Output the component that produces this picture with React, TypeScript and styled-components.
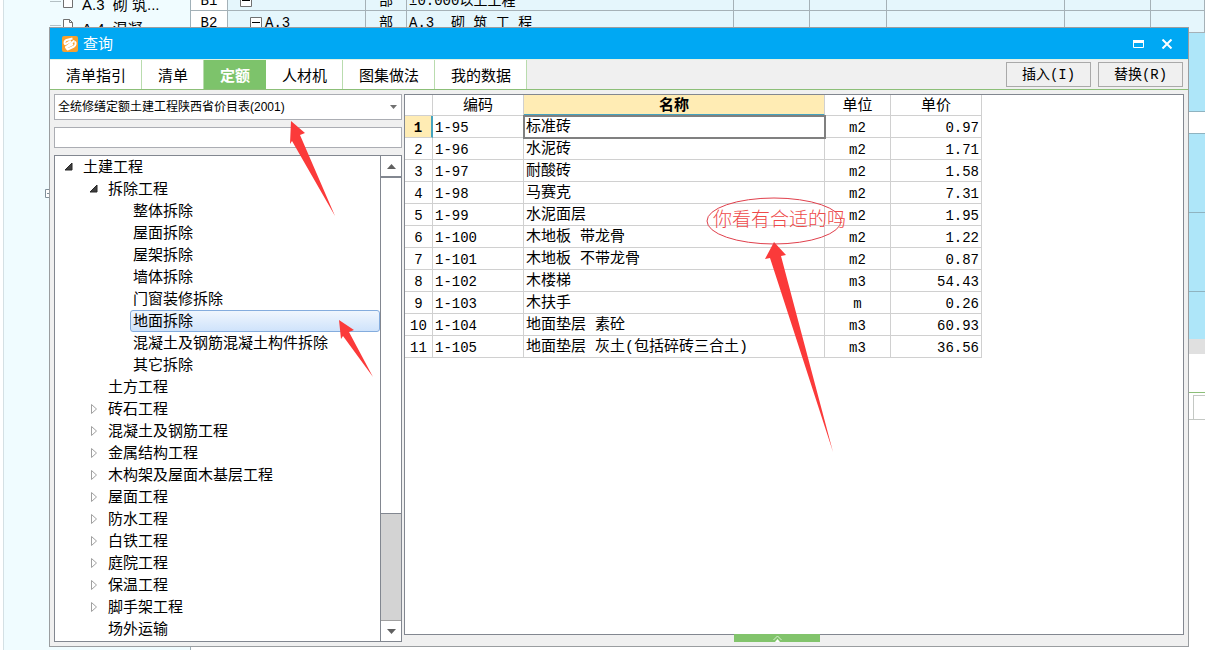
import React, { useState } from "react";
import styled, { createGlobalStyle, css } from "styled-components";

const sans = `"Liberation Sans", "Noto Sans CJK SC", sans-serif`;
const mono = `"Liberation Mono", "Noto Sans CJK SC", monospace`;

const GlobalStyle = createGlobalStyle`
  *, *::before, *::after { box-sizing: border-box; }
  body { margin: 0; background: #fff; color: #000; font-family: ${sans}; font-size: 15px; }
  button, input, select { font: inherit; color: inherit; margin: 0; border-radius: 0; }
`;

const Desktop = styled.div`
  position: relative;
  display: flex;
  height: 100vh;
  min-height: 480px;
  overflow: hidden;
`;

/* ---------- main window behind the dialog ---------- */

const OutlinePane = styled.aside`
  flex: none;
  width: 191px;
  padding-left: 50px;
  background: linear-gradient(90deg, #fff 3px, #d4e0e4 3px, #d4e0e4 4px, #f0fcff 4px);
  border-right: 1px solid #a0b0b8;
`;

const OutlineList = styled.div`
  margin-top: -7px;
`;

const OutlineItem = styled.div`
  display: flex;
  align-items: center;
  height: 24px;
  line-height: 24px;
  white-space: pre;
  &::before {
    content: "";
    flex: none;
    width: 11px;
    height: 1px;
    margin-bottom: 8px;
    background: #b4c0c4;
  }
  svg { flex: none; margin: 0 8px 8px 0; }
`;

const OutlineToggle = styled.svg`
  position: absolute;
  left: 45px;
  top: 189px;
`;

const Sheet = styled.div`
  flex: 1;
  min-width: 0;
  display: flex;
  flex-direction: column;
`;

/* scrolled by half a row, so the first row is partly out of view */
const SheetTable = styled.table`
  width: 100%;
  margin-top: -11px;
  table-layout: fixed;
  border-collapse: separate;
  border-spacing: 0;
  background: #e5f6fc;
  font-family: ${mono};
  font-size: 14px;
  td {
    height: 22px;
    padding: 3px 2px 0;
    line-height: 18px;
    border-right: 1px solid #a5b1b7;
    border-bottom: 1px solid #a5b1b7;
    white-space: pre;
    overflow: hidden;
  }
  td:first-child { background: #fff; text-align: center; }
  td:nth-child(3) { text-align: center; }
`;

const ToggleCell = styled.span<{ $level: number }>`
  display: flex;
  align-items: center;
  gap: 3px;
  padding-left: ${(p) => p.$level * 10}px;
`;

const Band = styled.div<{ $h: number; $tone: string; $line?: string }>`
  flex: none;
  display: flex;
  justify-content: flex-end;
  height: ${(p) => p.$h}px;
  background: ${(p) => p.$tone};
  border-bottom: 1px solid ${(p) => p.$line ?? "#8fb3c0"};
`;

const BandCell = styled.span`
  width: 12px;
  margin-top: 2px;
  border-top: 1px solid #c4c8c4;
  border-left: 1px solid #c4c8c4;
`;

/* ---------- dialog ---------- */

const Dialog = styled.section`
  position: absolute;
  inset: 27px 16px 3px 49px;
  display: flex;
  flex-direction: column;
  background: #f0f0f0;
  border: 1px solid #9a9da0;
`;

const TitleBar = styled.header`
  flex: none;
  display: flex;
  align-items: center;
  gap: 5px;
  height: 31px;
  padding: 0 14px 0 12px;
  background: #00a8f3;
  color: #fff;
`;

const Title = styled.h1`
  flex: 1;
  margin: 0;
  font-size: 15px;
  font-weight: 400;
  line-height: 20px;
`;

const WindowButton = styled.button`
  display: flex;
  align-items: center;
  justify-content: center;
  width: 14px;
  height: 20px;
  margin-left: 10px;
  padding: 0;
  border: 0;
  background: none;
`;

const TabBar = styled.div`
  flex: none;
  display: flex;
  align-items: stretch;
  height: 31px;
  border-top: 1px solid #e3f2e0;
  border-bottom: 1px solid #8cbf78;
`;

const Tab = styled.button<{ $active: boolean }>`
  padding: 3px 15px 0 16px;
  border: 0;
  border-right: 1px solid #b9dcae;
  background: #fff;
  line-height: 20px;
  ${(p) =>
    p.$active &&
    css`
      background: #7dc36b;
      border-color: #7dc36b;
      color: #fff;
      font-weight: 700;
    `}
`;

const Actions = styled.div`
  display: flex;
  align-items: center;
  gap: 7px;
  margin-left: auto;
  padding-right: 5px;
`;

const ActionButton = styled.button`
  width: 85px;
  height: 25px;
  padding: 0;
  border: 1px solid #a9a9a9;
  background: #f0f0f0;
  font-family: ${mono};
  font-size: 14px;
  line-height: 20px;
`;

const Body = styled.div`
  flex: 1;
  min-height: 0;
  display: flex;
  gap: 2px;
  padding: 4px;
`;

const Side = styled.div`
  flex: none;
  width: 348px;
  display: flex;
  flex-direction: column;
  gap: 7px;
`;

const SelectWrap = styled.div`
  flex: none;
  display: grid;
  align-items: center;
  > * { grid-area: 1 / 1; }
  svg { justify-self: end; margin-right: 5px; pointer-events: none; }
`;

const CatalogSelect = styled.select`
  appearance: none;
  width: 100%;
  height: 26px;
  padding: 0 20px 0 3px;
  border: 1px solid #abadb3;
  background: #fff;
  font-size: 12px;
`;

const SearchInput = styled.input`
  flex: none;
  width: 100%;
  height: 21px;
  padding: 0 4px;
  border: 1px solid #abadb3;
  background: #fff;
`;

const TreePanel = styled.div`
  flex: 1;
  min-height: 0;
  display: flex;
  border: 1px solid #828790;
  background: #fff;
`;

const Tree = styled.ul`
  flex: 1;
  min-width: 0;
  margin: 0;
  padding: 0;
  list-style: none;
  overflow: hidden;
`;

const TreeRow = styled.li<{ $depth: number }>`
  display: flex;
  align-items: center;
  height: 22px;
  padding-left: ${(p) => p.$depth * 25 + 8}px;
  svg { flex: none; }
`;

const TreeLabel = styled.span<{ $selected: boolean }>`
  flex: 1;
  height: 22px;
  margin-left: 5px;
  padding-left: 2px;
  border: 1px solid transparent;
  line-height: 20px;
  white-space: nowrap;
  ${(p) =>
    p.$selected &&
    css`
      border-color: #84acdd;
      border-radius: 3px;
      background: linear-gradient(#f0f6fd, #cfe3fb);
    `}
`;

const ScrollBar = styled.div`
  flex: none;
  display: flex;
  flex-direction: column;
  width: 21px;
  border-left: 1px solid #828790;
  background: #d3d3d3;
`;

const ScrollButton = styled.button`
  flex: none;
  display: flex;
  align-items: center;
  justify-content: center;
  height: 21px;
  padding: 0;
  border: 0;
  background: #fff;
  &:first-child { border-bottom: 1px solid #828790; }
  &:last-child { border-top: 1px solid #a0a0a0; }
`;

const ScrollTrack = styled.div`
  flex: 1;
  min-height: 0;
`;

const ScrollThumb = styled.div`
  height: 76%;
  background: #fff;
  border-top: 1px solid #828790;
  border-bottom: 1px solid #828790;
`;

const Main = styled.div`
  flex: 1;
  min-width: 0;
  display: flex;
  flex-direction: column;
`;

const GridPanel = styled.div`
  flex: 1;
  min-height: 0;
  border: 1px solid #828790;
  background: #fff;
  overflow: hidden;
`;

const ExpandHandle = styled.button`
  flex: none;
  display: flex;
  align-items: center;
  justify-content: center;
  align-self: center;
  width: 86px;
  height: 8px;
  margin: -1px 34px 0 0;
  padding: 0;
  border: 0;
  background: #82c46c;
`;

const QuotaTable = styled.table`
  width: 577px;
  table-layout: fixed;
  border-collapse: separate;
  border-spacing: 0;
  line-height: 18px;
  th, td {
    height: 22px;
    padding: 3px 2px 0;
    border-right: 1px solid #d0d0d0;
    border-bottom: 1px solid #d0d0d0;
    white-space: nowrap;
    font-weight: 400;
  }
  thead th { height: 21px; padding-top: 0; }
`;

const NameHead = styled.th`
  && {
    background: #ffecb4;
    border-bottom: 2px solid #45a3bf;
    font-weight: 700;
  }
`;

const NumberCell = styled.th<{ $active: boolean }>`
  font-family: ${mono};
  font-size: 14px;
  ${(p) =>
    p.$active &&
    css`
      && {
        background: #ffecb4;
        border-right: 2px solid #45a3bf;
        font-weight: 700;
      }
    `}
`;

const CodeCell = styled.td`
  font-family: ${mono};
  font-size: 14px;
`;

const NameCell = styled.td<{ $active: boolean }>`
  font-family: ${mono};
  ${(p) => p.$active && `outline: 2px solid #808080; outline-offset: -1px;`}
`;

const UnitCell = styled(CodeCell)`
  text-align: center;
`;

const PriceCell = styled(CodeCell)`
  text-align: right;
`;

/* ---------- markup drawn over the window ---------- */

const Markup = styled.svg`
  position: absolute;
  left: 0;
  top: 0;
  width: 1205px;
  height: 650px;
  pointer-events: none;
`;

const Note = styled.p`
  position: absolute;
  left: 713px;
  top: 208px;
  margin: 0;
  color: #ee4a4a;
  font-size: 19px;
  font-weight: 300;
  line-height: 24px;
`;

const TABS = ["清单指引", "清单", "定额", "人材机", "图集做法", "我的数据"];

type Node = { label: string; depth: number; state?: "open" | "closed" };

const NODES: Node[] = [
  { label: "土建工程", depth: 0, state: "open" },
  { label: "拆除工程", depth: 1, state: "open" },
  { label: "整体拆除", depth: 2 },
  { label: "屋面拆除", depth: 2 },
  { label: "屋架拆除", depth: 2 },
  { label: "墙体拆除", depth: 2 },
  { label: "门窗装修拆除", depth: 2 },
  { label: "地面拆除", depth: 2 },
  { label: "混凝土及钢筋混凝土构件拆除", depth: 2 },
  { label: "其它拆除", depth: 2 },
  { label: "土方工程", depth: 1 },
  { label: "砖石工程", depth: 1, state: "closed" },
  { label: "混凝土及钢筋工程", depth: 1, state: "closed" },
  { label: "金属结构工程", depth: 1, state: "closed" },
  { label: "木构架及屋面木基层工程", depth: 1, state: "closed" },
  { label: "屋面工程", depth: 1, state: "closed" },
  { label: "防水工程", depth: 1, state: "closed" },
  { label: "白铁工程", depth: 1, state: "closed" },
  { label: "庭院工程", depth: 1, state: "closed" },
  { label: "保温工程", depth: 1, state: "closed" },
  { label: "脚手架工程", depth: 1, state: "closed" },
  { label: "场外运输", depth: 1 },
];

const ROWS: [string, string, string, string][] = [
  ["1-95", "标准砖", "m2", "0.97"],
  ["1-96", "水泥砖", "m2", "1.71"],
  ["1-97", "耐酸砖", "m2", "1.58"],
  ["1-98", "马赛克", "m2", "7.31"],
  ["1-99", "水泥面层", "m2", "1.95"],
  ["1-100", "木地板 带龙骨", "m2", "1.22"],
  ["1-101", "木地板 不带龙骨", "m2", "0.87"],
  ["1-102", "木楼梯", "m3", "54.43"],
  ["1-103", "木扶手", "m", "0.26"],
  ["1-104", "地面垫层 素砼", "m3", "60.93"],
  ["1-105", "地面垫层 灰土(包括碎砖三合土)", "m3", "36.56"],
];

const FileIcon = () => (
  <svg width="13" height="13" viewBox="0 0 13 13">
    <path d="M2.5 .5h6l3 3v9h-9z M8.5 .5v3h3" fill="#fff" stroke="#707070" />
  </svg>
);

const MinusBox = () => (
  <svg width="12" height="12" viewBox="0 0 12 12">
    <path d="M.5 .5h11v11H.5z" fill="#fff" stroke="#707070" />
    <path d="M2 5.5h8" stroke="#000" />
  </svg>
);

const TreeArrow = ({ state }: { state?: "open" | "closed" }) => (
  <svg width="12" height="12" viewBox="0 0 12 12">
    {state === "open" && <path d="M9 2v7H2z" fill="#404040" stroke="#262626" />}
    {state === "closed" && <path d="M3.5 1.5v9l5-4.5z" fill="#fff" stroke="#a0a0a0" />}
  </svg>
);

const AppIcon = () => (
  <svg width="16" height="16" viewBox="0 0 16 16">
    <rect width="16" height="16" rx="2" fill="#f7a02e" />
    <path
      d="M10.500 2.500L4.500 4C2.500 4.800 2 6.800 3 8.300l6-3.300M13 5.500c1 1.500.8 4-1 5l-6.500 3L4 11.500l7-3.500"
      fill="none"
      stroke="#fff"
      strokeWidth="2"
      strokeLinejoin="round"
    />
    <path d="M3.500 11.500L12.500 4.500" stroke="#fff" strokeWidth="2" />
  </svg>
);

export default function App() {
  const [tab, setTab] = useState("定额");
  const [selected, setSelected] = useState("地面拆除");

  return (
    <Desktop>
      <GlobalStyle />
      <OutlinePane>
        <OutlineList>
          <OutlineItem><FileIcon />A.3  砌 筑...</OutlineItem>
          <OutlineItem><FileIcon />A.4  混凝...</OutlineItem>
        </OutlineList>
      </OutlinePane>
      <OutlineToggle width="9" height="9" viewBox="0 0 9 9">
        <path d="M.5 .5h8v8h-8z M2 4.500h5" fill="#fff" stroke="#80909a" />
      </OutlineToggle>
      <Sheet>
        <SheetTable>
          <colgroup>
            <col style={{ width: 37 }} />
            <col style={{ width: 138 }} />
            <col style={{ width: 41 }} />
            <col style={{ width: 327 }} />
            <col style={{ width: 76 }} />
            <col style={{ width: 77 }} />
            <col style={{ width: 178 }} />
            <col style={{ width: 86 }} />
            <col />
          </colgroup>
          <tbody>
            <tr>
              <td>B1</td>
              <td><ToggleCell $level={1}><MinusBox /></ToggleCell></td>
              <td>部</td>
              <td>±0.000以上工程</td>
              <td /><td /><td /><td /><td />
            </tr>
            <tr>
              <td>B2</td>
              <td><ToggleCell $level={2}><MinusBox />A.3</ToggleCell></td>
              <td>部</td>
              <td>A.3  砌 筑 工 程</td>
              <td /><td /><td /><td /><td />
            </tr>
          </tbody>
        </SheetTable>
        <Band $h={79} $tone="#aee6f9" />
        <Band $h={22} $tone="#fff" />
        <Band $h={79} $tone="#aee6f9" />
        <Band $h={79} $tone="#aee6f9" />
        <Band $h={48} $tone="#aee6f9" $line="#e0e0e0" />
        <Band $h={14} $tone="#e0e0e0" $line="#e0e0e0" />
        <Band $h={39} $tone="#fff" $line="#8cbf78" />
        <Band $h={27} $tone="#fff" $line="#c4c8c4"><BandCell /></Band>
      </Sheet>

      <Dialog role="dialog" aria-labelledby="dialog-title">
        <TitleBar>
          <AppIcon />
          <Title id="dialog-title">查询</Title>
          <WindowButton aria-label="最大化">
            <svg width="11" height="8" viewBox="0 0 11 8"><path d="M.5 .5h10v7H.5z" fill="none" stroke="#fff" /><path d="M0 0h11v3H0z" fill="#fff" /></svg>
          </WindowButton>
          <WindowButton aria-label="关闭">
            <svg width="12" height="10" viewBox="0 0 12 10"><path d="M1.500 .5l9 9M10.500 .5l-9 9" stroke="#fff" strokeWidth="2" /></svg>
          </WindowButton>
        </TitleBar>

        <TabBar>
          {TABS.map((t) => (
            <Tab key={t} $active={t === tab} onClick={() => setTab(t)}>{t}</Tab>
          ))}
          <Actions>
            <ActionButton>插入(I)</ActionButton>
            <ActionButton>替换(R)</ActionButton>
          </Actions>
        </TabBar>

        <Body>
          <Side>
            <SelectWrap>
              <CatalogSelect aria-label="定额库">
                <option>全统修缮定额土建工程陕西省价目表(2001)</option>
              </CatalogSelect>
              <svg width="7" height="4" viewBox="0 0 7 4"><path d="M0 0h7L3.500 4z" fill="#707070" /></svg>
            </SelectWrap>
            <SearchInput aria-label="搜索" />
            <TreePanel>
              <Tree>
                {NODES.map((n) => (
                  <TreeRow key={n.label} $depth={n.depth} onClick={() => setSelected(n.label)}>
                    <TreeArrow state={n.state} />
                    <TreeLabel $selected={n.label === selected}>{n.label}</TreeLabel>
                  </TreeRow>
                ))}
              </Tree>
              <ScrollBar>
                <ScrollButton aria-label="向上">
                  <svg width="9" height="5" viewBox="0 0 9 5"><path d="M0 5h9L4.500 0z" fill="#606060" /></svg>
                </ScrollButton>
                <ScrollTrack><ScrollThumb /></ScrollTrack>
                <ScrollButton aria-label="向下">
                  <svg width="9" height="5" viewBox="0 0 9 5"><path d="M0 0h9L4.500 5z" fill="#606060" /></svg>
                </ScrollButton>
              </ScrollBar>
            </TreePanel>
          </Side>

          <Main>
            <GridPanel>
              <QuotaTable>
                <colgroup>
                  <col style={{ width: 28 }} />
                  <col style={{ width: 91 }} />
                  <col style={{ width: 301 }} />
                  <col style={{ width: 66 }} />
                  <col style={{ width: 91 }} />
                </colgroup>
                <thead>
                  <tr>
                    <th aria-label="序号" />
                    <th>编码</th>
                    <NameHead>名称</NameHead>
                    <th>单位</th>
                    <th>单价</th>
                  </tr>
                </thead>
                <tbody>
                  {ROWS.map(([code, name, unit, price], i) => (
                    <tr key={code}>
                      <NumberCell scope="row" $active={i === 0}>{i + 1}</NumberCell>
                      <CodeCell>{code}</CodeCell>
                      <NameCell $active={i === 0}>{name}</NameCell>
                      <UnitCell>{unit}</UnitCell>
                      <PriceCell>{price}</PriceCell>
                    </tr>
                  ))}
                </tbody>
              </QuotaTable>
            </GridPanel>
            <ExpandHandle aria-label="展开">
              <svg width="9" height="7" viewBox="0 0 9 7"><path d="M.5 5l4-4 4 4" fill="none" stroke="#d9f0d0" /><path d="M2 7l2.500-3L7 7z" fill="#fff" /></svg>
            </ExpandHandle>
          </Main>
        </Body>
      </Dialog>

      <Markup viewBox="0 0 1205 650" aria-hidden="true">
        <g fill="#fb3a3a">
          <path d="M291 121l14 12-5 2 35 81-43-75-2 3z" />
          <path d="M339 320l15 10-5 2 24 45-30-41-2 3z" />
          <path d="M774 242l12 13-5 1 52 196-63-194-5 1z" />
        </g>
        <ellipse cx="774" cy="221" rx="67" ry="23" fill="none" stroke="#e0404c" />
      </Markup>
      <Note>你看有合适的吗</Note>
    </Desktop>
  );
}
